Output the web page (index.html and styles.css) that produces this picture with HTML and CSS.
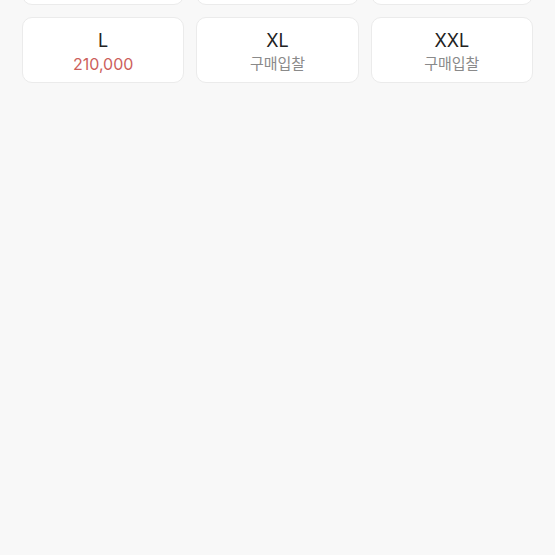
FILE: index.html
```html
<!DOCTYPE html>
<html lang="ko">

<head>
  <meta charset="UTF-8">
  <meta name="viewport" content="width=device-width, initial-scale=1.0">
  <title>사이즈 선택</title>
  <link rel="stylesheet" href="styles.css">
</head>

<body>
  <div class="size-list">
    <!-- 위쪽 줄은 스크롤로 잘려 있음 -->
    <div class="size-grid">
      <div class="size-btn"></div>
      <div class="size-btn"></div>
      <div class="size-btn"></div>
    </div>
    <div class="size-grid">
      <button class="size-btn"><span class="size">L</span><span class="price sale">210,000</span></button>
      <button class="size-btn"><span class="size">XL</span><span class="price">구매입찰</span></button>
      <button class="size-btn"><span class="size">XXL</span><span class="price">구매입찰</span></button>
    </div>
  </div>
</body>

</html>
```

FILE: styles.css
```css
body {
  margin: 0;
  padding: 0;
  background-color: #f8f8f8;
  font-family: Inter, "Noto Sans CJK KR", sans-serif;
  height: 555px;
  overflow: hidden;
}

.size-list {
  display: flex;
  flex-direction: column;
  gap: 12px;
  padding: 0 22px;
  margin-top: -61px;
}

.size-grid {
  display: grid;
  grid-template-columns: repeat(3, 1fr);
  gap: 12px;
}

.size-btn {
  box-sizing: border-box;
  height: 66px;
  display: flex;
  flex-direction: column;
  align-items: center;
  justify-content: center;
  gap: 2px;
  background-color: #fff;
  border: 1px solid #ebebeb;
  border-radius: 10px;
  font-family: inherit;
  padding: 4px 0 0;
}

.size {
  font-size: 18px;
  color: #222;
  line-height: 22px;
}

.price {
  font-size: 15px;
  color: #8a8a8a;
  line-height: 20px;
}

.price.sale {
  font-size: 16px;
  color: #cc5f5c;
}
```
